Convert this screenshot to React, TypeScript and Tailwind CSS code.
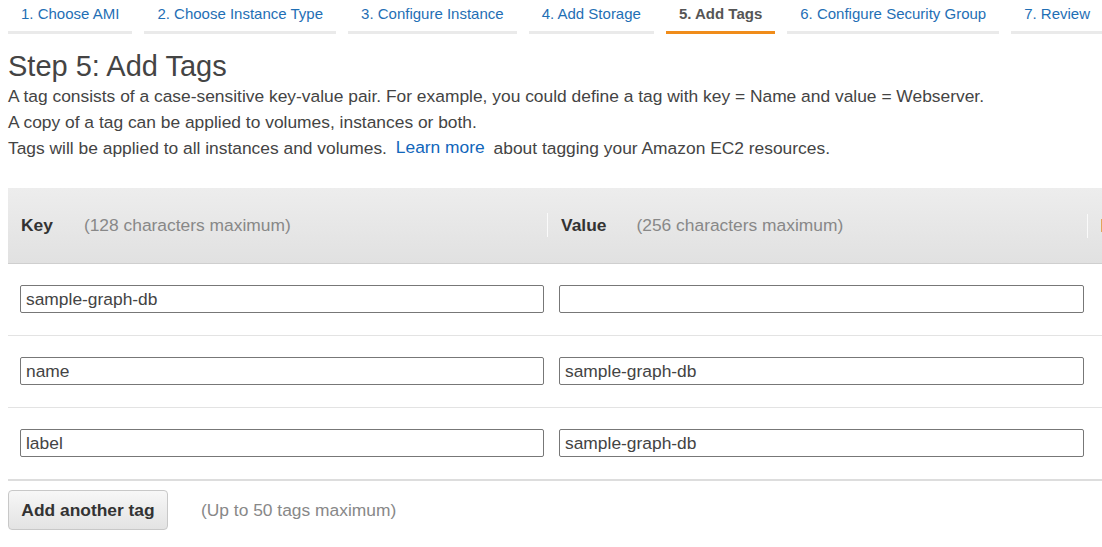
import React from "react";

const steps = [
    "1. Choose AMI",
    "2. Choose Instance Type",
    "3. Configure Instance",
    "4. Add Storage",
    "5. Add Tags",
    "6. Configure Security Group",
    "7. Review",
];

const tags = [
    { key: "sample-graph-db", value: "" },
    { key: "name", value: "sample-graph-db" },
    { key: "label", value: "sample-graph-db" },
];

function TagInput({ value }: { value: string }) {
    return (
        <input
            readOnly
            value={value}
            className="block w-full h-[28px] px-[5px] border border-[#777] rounded-[2px] bg-white text-[17.4px] text-[#444] outline-none font-['Liberation_Sans',Arial,sans-serif]"
        />
    );
}

export default function App() {
    return (
        <div className="w-[1102px] h-[547px] overflow-hidden bg-white font-['Liberation_Sans',Arial,sans-serif] text-[#444]">
            {/* Wizard steps */}
            <div className="flex gap-[12px] pl-[8px] whitespace-nowrap">
                {steps.map((step, i) => {
                    const active = i === 4;
                    return (
                        <div
                            key={step}
                            className={
                                active
                                    ? "shrink-0 px-[13px] pt-[4px] pb-[7px] leading-[20px] text-[15px] font-bold text-[#555] border-b-[3px] border-[#f08c1a]"
                                    : "shrink-0 px-[13px] pt-[4px] pb-[7px] leading-[20px] text-[15px] text-[#1f6fb5] border-b-[3px] border-[#eaeaea]"
                            }
                        >
                            {step}
                        </div>
                    );
                })}
            </div>

            {/* Intro */}
            <div className="px-[8px] mt-[15px]">
                <h1 className="text-[29px] leading-[34px] text-[#444]">Step 5: Add Tags</h1>
                <div className="text-[17.4px] leading-[26px] whitespace-nowrap">
                    <p>A tag consists of a case-sensitive key-value pair. For example, you could define a tag with key = Name and value = Webserver.</p>
                    <p>A copy of a tag can be applied to volumes, instances or both.</p>
                    <p>
                        Tags will be applied to all instances and volumes.
                        <a className="relative -top-px mx-[4px] text-[#1166bb] cursor-pointer"> Learn more </a>
                        about tagging your Amazon EC2 resources.
                    </p>
                </div>
            </div>

            {/* Tag table */}
            <div className="ml-[8px] mt-[27px] w-[1300px] text-[17.4px]">
                <div className="grid grid-cols-[539px_540px_1fr] h-[76px] items-center border-b border-[#cfcfcf] bg-gradient-to-b from-[#ededed] to-[#e1e1e1]">
                    <div className="pl-[13px] flex items-center">
                        <span className="font-bold text-[#333]">Key</span>
                        <span className="ml-[31px] text-[#888]">(128 characters maximum)</span>
                    </div>
                    <div className="flex items-center">
                        <span className="w-px h-[24px] bg-[#fafafa]" />
                        <span className="ml-[13px] font-bold text-[#333]">Value</span>
                        <span className="ml-[30px] text-[#888]">(256 characters maximum)</span>
                    </div>
                    <div className="flex items-center">
                        <span className="w-px h-[24px] bg-[#fafafa]" />
                        <span className="ml-[13px] w-[14px] h-[13px] bg-[#e2a45a]" />
                    </div>
                </div>

                {tags.map((tag, i) => (
                    <div
                        key={i}
                        className={
                            i === tags.length - 1
                                ? "grid grid-cols-[539px_540px_1fr] pt-[21px] pb-[22px] border-b-2 border-[#dddddd]"
                                : "grid grid-cols-[539px_540px_1fr] pt-[21px] pb-[22px] border-b border-[#e3e3e3]"
                        }
                    >
                        <div className="pl-[12px] pr-[3px]">
                            <TagInput value={tag.key} />
                        </div>
                        <div className="pl-[12px] pr-[3px]">
                            <TagInput value={tag.value} />
                        </div>
                        <div />
                    </div>
                ))}
            </div>

            {/* Add tag */}
            <div className="flex items-center px-[8px] mt-[9px] text-[17.4px]">
                <button className="h-[40px] w-[160px] rounded-[4px] border border-[#c8c8c8] bg-gradient-to-b from-[#f7f7f7] to-[#e3e3e3] font-bold text-[#333]">
                    Add another tag
                </button>
                <span className="ml-[33px] text-[#888]">(Up to 50 tags maximum)</span>
            </div>
        </div>
    );
}
